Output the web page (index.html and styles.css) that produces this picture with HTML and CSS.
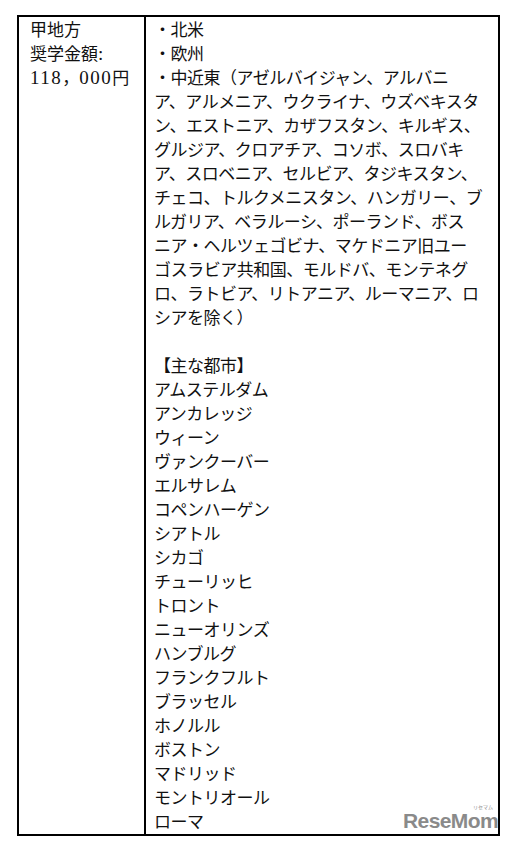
FILE: index.html
```html
<!DOCTYPE html>
<html lang="ja">
<head>
<meta charset="utf-8">
<title>甲地方</title>
<link rel="stylesheet" href="styles.css">
</head>
<body>
<div class="page">
  <div class="table">
    <div class="cell left">
      <div class="line">甲地方</div>
      <div class="line">奨学金額<span class="num">:</span></div>
      <div class="line"><span class="num">118</span>，<span class="num">000</span>円</div>
    </div>
    <div class="cell right">
      <div class="line">・北米</div>
      <div class="line">・欧州</div>
      <div class="line">・中近東（アゼルバイジャン、アルバニ</div>
      <div class="line">ア、アルメニア、ウクライナ、ウズベキスタ</div>
      <div class="line">ン、エストニア、カザフスタン、キルギス、</div>
      <div class="line">グルジア、クロアチア、コソボ、スロバキ</div>
      <div class="line">ア、スロベニア、セルビア、タジキスタン、</div>
      <div class="line">チェコ、トルクメニスタン、ハンガリー、ブ</div>
      <div class="line">ルガリア、ベラルーシ、ポーランド、ボス</div>
      <div class="line">ニア・ヘルツェゴビナ、マケドニア旧ユー</div>
      <div class="line">ゴスラビア共和国、モルドバ、モンテネグ</div>
      <div class="line">ロ、ラトビア、リトアニア、ルーマニア、ロ</div>
      <div class="line">シアを除く）</div>
      <div class="line blank"></div>
      <div class="line">【主な都市】</div>
      <div class="line">アムステルダム</div>
      <div class="line">アンカレッジ</div>
      <div class="line">ウィーン</div>
      <div class="line">ヴァンクーバー</div>
      <div class="line">エルサレム</div>
      <div class="line">コペンハーゲン</div>
      <div class="line">シアトル</div>
      <div class="line">シカゴ</div>
      <div class="line">チューリッヒ</div>
      <div class="line">トロント</div>
      <div class="line">ニューオリンズ</div>
      <div class="line">ハンブルグ</div>
      <div class="line">フランクフルト</div>
      <div class="line">ブラッセル</div>
      <div class="line">ホノルル</div>
      <div class="line">ボストン</div>
      <div class="line">マドリッド</div>
      <div class="line">モントリオール</div>
      <div class="line">ローマ</div>
    </div>
  </div>
  <div class="watermark">
    <span class="wm-kana">リセマム</span>
    <span class="wm-text">ReseMom</span>
  </div>
</div>
</body>
</html>
```
FILE: styles.css
```css
html, body {
  margin: 0;
  padding: 0;
  background: #ffffff;
}

.page {
  position: relative;
  width: 512px;
  height: 845px;
  padding-top: 15px;
  padding-left: 17px;
  box-sizing: border-box;
}

.table {
  box-sizing: border-box;
  width: 483px;
  border: 2px solid #000;
  display: grid;
  grid-template-columns: 127px 1fr;
  font-family: "Noto Sans CJK JP", sans-serif;
  font-size: 17px;
  color: #111;
}

.cell {
  padding-bottom: 1px;
}

.left {
  border-right: 2px solid #000;
  padding-left: 11px;
}

.right {
  padding-left: 8px;
  letter-spacing: -0.5px;
}

.line {
  height: 24px;
  line-height: 24px;
  white-space: nowrap;
}

.num {
  font-family: "Liberation Serif", serif;
  font-size: 19px;
  letter-spacing: 1.5px;
}

.watermark {
  position: absolute;
  left: 403px;
  top: 804px;
  width: 96px;
  height: 28px;
}

.wm-text {
  position: absolute;
  left: 0;
  top: 7px;
  font-family: "Liberation Sans", sans-serif;
  font-weight: bold;
  font-size: 21px;
  line-height: 20px;
  letter-spacing: -0.6px;
  color: #8a8a8a;
}

.wm-kana {
  position: absolute;
  left: 70px;
  top: 0;
  font-family: "Noto Sans CJK JP", sans-serif;
  font-size: 5px;
  line-height: 6px;
  color: #8a8a8a;
}
```
